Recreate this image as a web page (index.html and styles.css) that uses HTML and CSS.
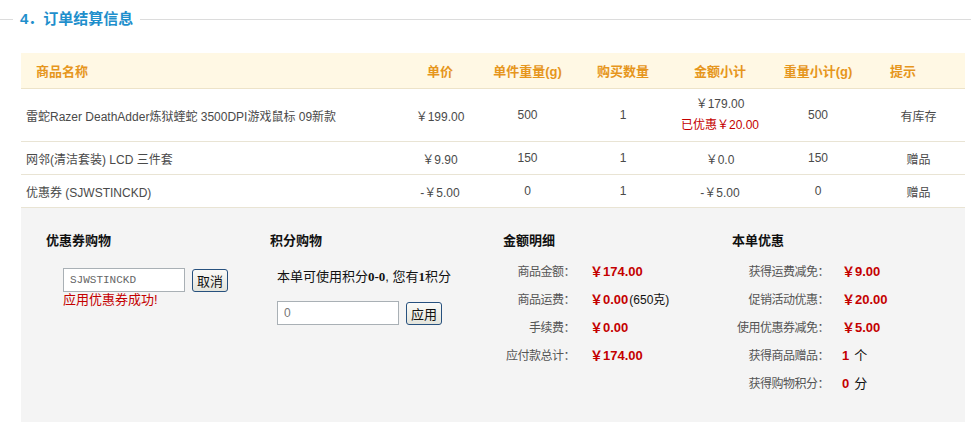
FILE: index.html
```html
<!DOCTYPE html>
<html>
<head>
  <meta charset="utf-8">
  <title>订单结算信息</title>
  <link rel="stylesheet" href="styles.css">
</head>
<body>

<div class="section-title">
  <span class="rule rule-short"></span>
  <h2>4．订单结算信息</h2>
  <span class="rule"></span>
</div>

<table class="order-table">
  <colgroup>
    <col class="col-name">
    <col class="col-price">
    <col class="col-weight">
    <col class="col-qty">
    <col class="col-amount">
    <col class="col-wsum">
    <col class="col-tip">
  </colgroup>
  <thead>
    <tr>
      <th class="name">商品名称</th>
      <th>单价</th>
      <th>单件重量(g)</th>
      <th>购买数量</th>
      <th>金额小计</th>
      <th>重量小计(g)</th>
      <th class="tip">提示</th>
    </tr>
  </thead>
  <tbody>
    <tr class="row-tall">
      <td class="name">雷蛇Razer DeathAdder炼狱蝰蛇 3500DPI游戏鼠标 09新款</td>
      <td>￥199.00</td>
      <td>500</td>
      <td>1</td>
      <td class="amount-cell">
        <div>￥179.00</div>
        <div class="saved">已优惠￥20.00</div>
      </td>
      <td>500</td>
      <td>有库存</td>
    </tr>
    <tr>
      <td class="name">网邻(清洁套装) LCD 三件套</td>
      <td>￥9.90</td>
      <td>150</td>
      <td>1</td>
      <td>￥0.0</td>
      <td>150</td>
      <td>赠品</td>
    </tr>
    <tr>
      <td class="name">优惠券 (SJWSTINCKD)</td>
      <td>-￥5.00</td>
      <td>0</td>
      <td>1</td>
      <td>-￥5.00</td>
      <td>0</td>
      <td>赠品</td>
    </tr>
  </tbody>
</table>

<div class="summary">
  <div class="summary-col">
    <h3>优惠券购物</h3>
    <div class="coupon-form">
      <div class="field-row">
        <input class="text-input code-input" type="text" value="SJWSTINCKD">
        <button class="xp-btn">取消</button>
      </div>
      <div class="coupon-msg">应用优惠券成功!</div>
    </div>
  </div>

  <div class="summary-col">
    <h3>积分购物</h3>
    <div class="points-form">
      <p class="points-note">本单可使用积分<b class="num">0-0</b>, 您有<b class="num">1</b>积分</p>
      <div class="field-row">
        <input class="text-input" type="text" value="0">
        <button class="xp-btn">应用</button>
      </div>
    </div>
  </div>

  <div class="summary-col">
    <h3>金额明细</h3>
    <ul class="detail-list money">
      <li><span class="label">商品金额：</span><span class="value">￥174.00</span></li>
      <li><span class="label">商品运费：</span><span class="value">￥0.00</span><span class="extra">(650克)</span></li>
      <li><span class="label">手续费：</span><span class="value">￥0.00</span></li>
      <li><span class="label">应付款总计：</span><span class="value">￥174.00</span></li>
    </ul>
  </div>

  <div class="summary-col">
    <h3>本单优惠</h3>
    <ul class="detail-list promo">
      <li><span class="label">获得运费减免：</span><span class="value">￥9.00</span></li>
      <li><span class="label">促销活动优惠：</span><span class="value">￥20.00</span></li>
      <li><span class="label">使用优惠券减免：</span><span class="value">￥5.00</span></li>
      <li><span class="label">获得商品赠品：</span><span class="value">1</span><span class="unit">个</span></li>
      <li><span class="label">获得购物积分：</span><span class="value">0</span><span class="unit">分</span></li>
    </ul>
  </div>
</div>

</body>
</html>
```

FILE: styles.css
```css
body {margin: 0; background: #fff; color: #444; font-family: "Liberation Sans", "Noto Sans CJK SC", sans-serif; font-size: 12px;}

/* section heading sitting on a grey rule */
.section-title {display: flex; align-items: center; padding-top: 9px;}
.section-title h2 {margin: 0; padding: 0 7px; font-size: 15px; line-height: 20px; font-weight: bold; color: #1f8fcc; white-space: nowrap;}
.rule {flex: 1; height: 1px; background: #dcdcdc;}
.rule-short {flex: 0 0 13px;}

/* goods table */
.order-table {margin: 24px 0 0 21px; width: 944px; border-collapse: collapse; table-layout: fixed;}
.col-name {width: 374px;}
.col-price {width: 90px;}
.col-weight {width: 85px;}
.col-qty {width: 106px;}
.col-amount {width: 88px;}
.col-wsum {width: 108px;}
.col-tip {width: 93px;}

.order-table th {height: 35px; padding: 0; background: #fff8e4; color: #e6961c; font-size: 13px; font-weight: bold; text-align: center; border-bottom: 1px solid #ede3c8;}
.order-table td {height: 32px; padding: 0; text-align: center; color: #4a4a4a; border-bottom: 1px solid #e9e4d4;}
.order-table tr.row-tall td {height: 52px;}
.order-table th.name {text-align: left; padding-left: 15px;}
.order-table td.name {text-align: left; padding-left: 5px;}
.order-table th.tip {text-align: left; padding-left: 18px;}

.amount-cell div {line-height: 21px;}
.amount-cell .saved {color: #c40000;}

/* grey summary panel */
.summary {margin-left: 21px; width: 944px; height: 220px; box-sizing: border-box; padding: 25px 0 0 25px; background: #f4f4f4; display: grid; grid-template-columns: 224px 233px 229px 1fr;}
.summary h3 {margin: 0; font-size: 13px; line-height: 16px; font-weight: bold; color: #111;}

.field-row {display: flex; align-items: center; gap: 7px;}
.text-input {box-sizing: border-box; width: 122px; height: 24px; margin: 0; padding: 0 6px; border: 1px solid #a9b0b5; background: #fff; color: #777; font-family: "Liberation Sans", sans-serif; font-size: 12px;}
.code-input {font-family: "Liberation Mono", monospace; font-size: 11px; color: #666;}
.xp-btn {box-sizing: border-box; height: 23px; margin: 0; padding: 0 4px; border: 1px solid #27517e; border-radius: 3px; background: linear-gradient(#fbfbf8, #e3e4dc); color: #111; font-family: "Noto Sans CJK SC", sans-serif; font-size: 13px; line-height: 19px;}

.coupon-form {margin-top: 19px; padding-left: 17px;}
.coupon-msg {color: #c40000; font-size: 13px; line-height: 15px;}

.points-form {padding-left: 7px;}
.points-note {margin: 19px 0 15px; font-size: 13px; line-height: 18px; color: #111;}
.points-note .num {font-family: "Liberation Serif", serif; font-weight: bold;}

/* label / value rows */
.detail-list {margin: 9px 0 0; padding: 0; list-style: none;}
.detail-list li {display: flex; align-items: baseline; line-height: 28px; white-space: nowrap;}
.detail-list .label {flex: none; text-align: right; color: #555; letter-spacing: -0.5px;}
.detail-list .value {color: #c40000; font-size: 13px; font-weight: bold;}
.detail-list .extra {color: #111; margin-left: 1px;}
.detail-list .unit {color: #111; margin-left: 5px; font-size: 13px;}
.money .label {width: 72px;}
.money .value {margin-left: 15px;}
.promo .label {width: 97px;}
.promo .value {margin-left: 13px;}
```
